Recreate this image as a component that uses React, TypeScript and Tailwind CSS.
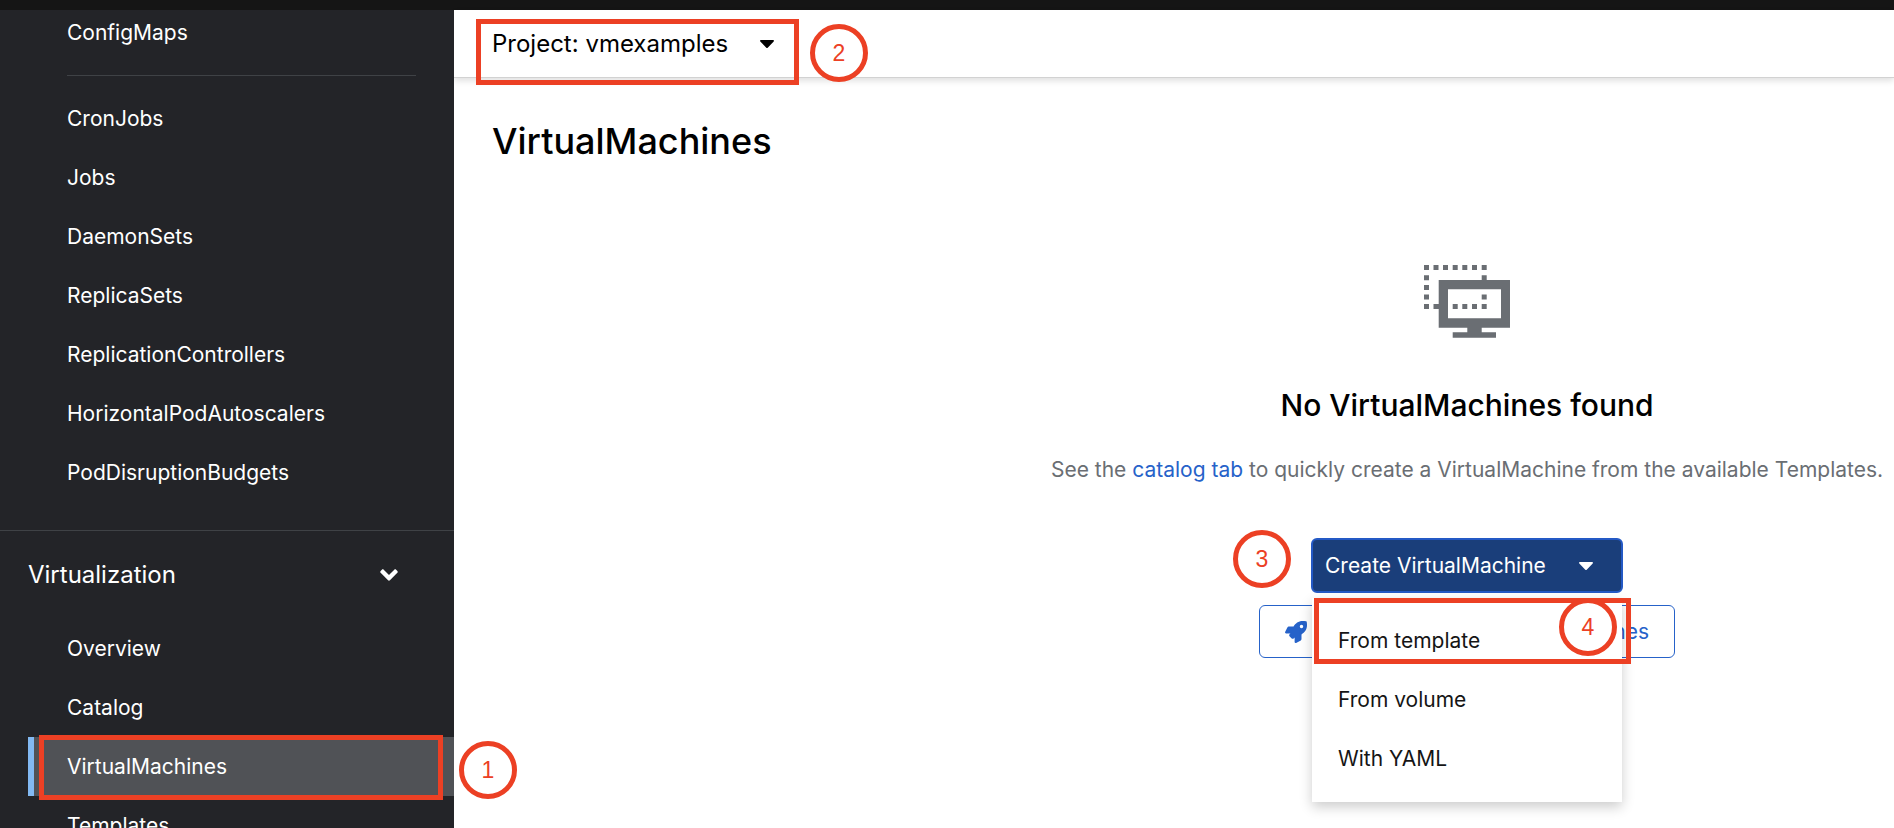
import { FaAngleDown, FaRocket } from "react-icons/fa";

const workloads = [
  "CronJobs",
  "Jobs",
  "DaemonSets",
  "ReplicaSets",
  "ReplicationControllers",
  "HorizontalPodAutoscalers",
  "PodDisruptionBudgets",
];

const virtualization = ["Overview", "Catalog", "VirtualMachines", "Templates"];

const createOptions = ["From template", "From volume", "With YAML"];

function Step({ value, className }: { value: number; className: string }) {
  return (
    <span
      className={`absolute z-30 flex size-[58px] items-center justify-center rounded-full border-5 border-[#ec4024] font-['Liberation_Sans',sans-serif] text-[23px] leading-none text-[#ec4024] ${className}`}
    >
      {value}
    </span>
  );
}

function Highlight({ className }: { className: string }) {
  return (
    <span
      className={`pointer-events-none absolute z-20 border-5 border-[#ec4024] ${className}`}
    />
  );
}

function Caret({ className }: { className: string }) {
  return (
    <svg viewBox="0 0 14 8" className={className} fill="currentColor" aria-hidden="true">
      <path d="M0.9 0h12.2c.8 0 1.2.9.6 1.5L7.7 7.7c-.4.4-1 .4-1.4 0L.3 1.5C-.3.9.1 0 .9 0z" />
    </svg>
  );
}

function NavLink({ label, current }: { label: string; current?: boolean }) {
  return (
    <li className="relative">
      <a
        href="#"
        aria-current={current ? "page" : undefined}
        className={`ml-7 flex h-[59px] items-center border-l-6 pl-[33px] ${
          current ? "border-[#82b9f2] bg-[#505256]" : "border-transparent"
        }`}
      >
        {label}
      </a>
      {current && (
        <>
          <Highlight className="-top-0.5 -bottom-1 left-[39px] right-[11px]" />
          <Step value={1} className="left-full top-1 ml-[5px]" />
        </>
      )}
    </li>
  );
}

function VirtualMachineIcon() {
  return (
    <svg width="86" height="73" viewBox="0 0 86 73" fill="#6a6e73" aria-hidden="true">
      <path d="M0 0h5v5H0zM9.5 0h5v5h-5zM19 0h5v5h-5zM28.7 0h5v5h-5zM38.3 0h5v5h-5zM48 0h5v5h-5zM57.7 0h5v5h-5z" />
      <path d="M0 10.3h5v5H0zM57.7 10.3h5v5h-5zM0 20h5v5H0zM0 29.5h5v5H0zM57.7 29.5h5v5h-5z" />
      <path d="M0 39h5v5H0zM9.5 39h6v5h-6zM28.7 39h5v5h-5zM38.3 39h5v5h-5zM48 39h5v5h-5zM57.7 39h5v5h-5z" />
      <path
        fillRule="evenodd"
        d="M14.7 15H86v47.7H57.7v4.6H72v5.4H28.7v-5.4h14.6v-4.6H14.7zM24 24.3v29h53v-29z"
      />
    </svg>
  );
}

export default function App() {
  return (
    <div className="flex h-screen flex-col overflow-hidden bg-white font-['Inter',sans-serif] text-[21px] text-[#151515]">
      <header className="h-[10px] shrink-0 bg-[#151515]" />
      <div className="flex min-h-0 flex-1">
        <aside className="relative z-10 w-[454px] shrink-0 bg-[#232428] text-white">
          <nav className="-mt-[7px]">
            <ul>
              <NavLink label="ConfigMaps" />
            </ul>
            <hr className="my-[13px] ml-[67px] mr-[38px] border-[#3f4246]" />
            <ul className="border-b border-[#3f4246] pb-7">
              {workloads.map((label) => (
                <NavLink key={label} label={label} />
              ))}
            </ul>
            <button className="flex h-[88px] w-full items-center justify-between pl-7 pr-[51px] text-[24px]">
              Virtualization
              <FaAngleDown className="size-7" />
            </button>
            <ul>
              {virtualization.map((label) => (
                <NavLink key={label} label={label} current={label === "VirtualMachines"} />
              ))}
            </ul>
          </nav>
        </aside>

        <main className="min-w-0 flex-1">
          <div className="flex h-[68px] items-start border-b border-[#d2d2d2] pl-[22px] pt-[10px] shadow-[0_3px_6px_rgba(0,0,0,0.12)]">
            <div className="relative">
              <button className="flex h-12 w-[323px] items-center justify-between pl-4 pr-[25px] text-[24px] text-black">
                Project: vmexamples
                <Caret className="h-2 w-[14px]" />
              </button>
              <Highlight className="inset-x-0 -top-px h-[66px]" />
              <Step value={2} className="left-full top-1 ml-[11px]" />
            </div>
          </div>

          <h1 className="mt-[39px] pl-[38px] text-[36px] leading-[48px] font-medium text-black">
            VirtualMachines
          </h1>

          <div className="mt-[100px] flex justify-end pr-[11px]">
            <section className="flex w-[832px] flex-col items-center">
              <VirtualMachineIcon />
              <h2 className="mt-[46px] text-[30px] leading-[42px] font-medium text-black">
                No VirtualMachines found
              </h2>
              <p className="mt-7 leading-8 whitespace-nowrap text-[#6a6e73]">
                See the{" "}
                <a href="#" className="text-[#2662c9]">
                  catalog tab
                </a>{" "}
                to quickly create a VirtualMachine from the available Templates.
              </p>

              <div className="relative mt-[52px]">
                <button
                  aria-expanded="true"
                  className="flex h-[55px] w-[312px] items-center justify-between rounded-md border-2 border-[#2459c5] bg-[#1a3e7a] pl-3 pr-7 text-white"
                >
                  Create VirtualMachine
                  <Caret className="h-2 w-[14px]" />
                </button>
                <Step value={3} className="right-full -top-2 mr-[20px]" />
                <ul className="absolute inset-x-px top-[60px] z-10 bg-white pt-[13px] pb-[14px] shadow-[0_5px_12px_rgba(0,0,0,0.2)]">
                  {createOptions.map((label) => (
                    <li key={label}>
                      <button className="flex h-[59px] w-full items-center pl-[26px]">
                        {label}
                      </button>
                    </li>
                  ))}
                </ul>
                <Highlight className="left-[3px] -right-2 top-[60px] h-[66px]" />
                <Step value={4} className="right-[6px] top-[60px]" />
              </div>

              <button className="mt-3 flex h-[53px] w-[416px] items-center justify-between whitespace-nowrap rounded-md border border-[#2662c9] px-[25px] text-[#2662c9]">
                <FaRocket className="size-[22px]" />
                Learn how to use VirtualMachines
              </button>
            </section>
          </div>
        </main>
      </div>
    </div>
  );
}
